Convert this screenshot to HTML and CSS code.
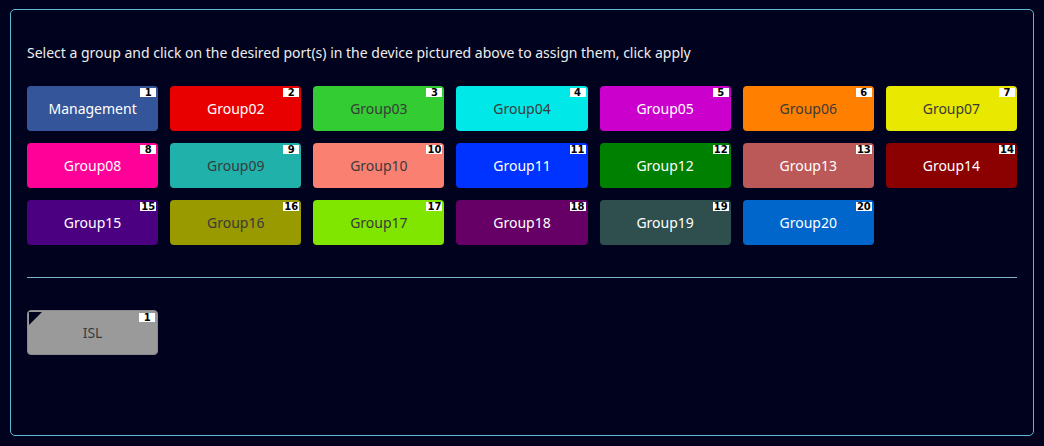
FILE: index.html
```html
<!DOCTYPE html>
<html lang="en">
<head>
    <meta charset="UTF-8">
    <title>Port groups</title>
    <link rel="stylesheet" href="styles.css">
</head>
<body>
    <div class="panel">
        <p class="hint">Select a group and click on the desired port(s) in the device pictured above to assign them, click apply</p>

        <div class="groups">
            <div class="group g01"><span class="num">1</span>Management</div>
            <div class="group g02"><span class="num">2</span>Group02</div>
            <div class="group g03 dark"><span class="num">3</span>Group03</div>
            <div class="group g04 dark"><span class="num">4</span>Group04</div>
            <div class="group g05"><span class="num">5</span>Group05</div>
            <div class="group g06 dark"><span class="num">6</span>Group06</div>
            <div class="group g07 dark"><span class="num">7</span>Group07</div>
            <div class="group g08"><span class="num">8</span>Group08</div>
            <div class="group g09 dark"><span class="num">9</span>Group09</div>
            <div class="group g10 dark"><span class="num">10</span>Group10</div>
            <div class="group g11"><span class="num">11</span>Group11</div>
            <div class="group g12"><span class="num">12</span>Group12</div>
            <div class="group g13"><span class="num">13</span>Group13</div>
            <div class="group g14"><span class="num">14</span>Group14</div>
            <div class="group g15"><span class="num">15</span>Group15</div>
            <div class="group g16 dark"><span class="num">16</span>Group16</div>
            <div class="group g17 dark"><span class="num">17</span>Group17</div>
            <div class="group g18"><span class="num">18</span>Group18</div>
            <div class="group g19"><span class="num">19</span>Group19</div>
            <div class="group g20"><span class="num">20</span>Group20</div>
        </div>

        <hr class="divider">

        <div class="groups">
            <div class="group isl dark"><span class="corner"></span><span class="num">1</span>ISL</div>
        </div>
    </div>
</body>
</html>
```

FILE: styles.css
```css
body {
    margin: 0;
    background-color: #00021e;
    font-family: "Noto Sans", Arial, sans-serif;
    color: #e8e8e8;
}
.panel {
    margin: 9px 10px 10px 10px;
    height: 427px;
    box-sizing: border-box;
    border: 1px solid #5fb8d6;
    border-radius: 5px;
    padding: 0 16px;
}
.hint {
    margin: 33px 0 23px 0;
    font-size: 14px;
    line-height: 20px;
    color: #eeeeee;
}
.groups {
    display: grid;
    grid-template-columns: repeat(7, 1fr);
    grid-auto-rows: 45px;
    gap: 12px;
}
.group {
    position: relative;
    display: flex;
    align-items: center;
    justify-content: center;
    border-radius: 4px;
    font-size: 14px;
    color: #ffffff;
    cursor: pointer;
}
.group.dark {
    color: #3a3a3a;
}
.num {
    position: absolute;
    top: 2px;
    right: 2px;
    width: 16px;
    height: 9px;
    background: #ffffff;
    color: #000000;
    font-size: 10px;
    font-weight: bold;
    line-height: 9px;
    text-align: center;
    font-family: "DejaVu Sans", sans-serif;
}
.corner {
    position: absolute;
    top: 1px;
    left: 1px;
    width: 0;
    height: 0;
    border-top: 13px solid #00021e;
    border-right: 13px solid transparent;
}
.divider {
    margin: 32px 0 32px 0;
    border: 0;
    border-top: 1px solid #7fb2cc;
}

.g01 { background: #34559a; }
.g02 { background: #e80000; }
.g03 { background: #33cc33; }
.g04 { background: #00e8e8; }
.g05 { background: #cc00cc; }
.g06 { background: #ff8000; }
.g07 { background: #e8e800; }
.g08 { background: #ff0099; }
.g09 { background: #20b2aa; }
.g10 { background: #fa8072; }
.g11 { background: #0033ff; }
.g12 { background: #008000; }
.g13 { background: #bb5858; }
.g14 { background: #8b0000; }
.g15 { background: #4b0082; }
.g16 { background: #999900; }
.g17 { background: #80e600; }
.g18 { background: #660066; }
.g19 { background: #2f4f4f; }
.g20 { background: #0066cc; }
.isl { background: #9a9a9a; border: 1px solid #8a8a8a; box-sizing: border-box; }
```
